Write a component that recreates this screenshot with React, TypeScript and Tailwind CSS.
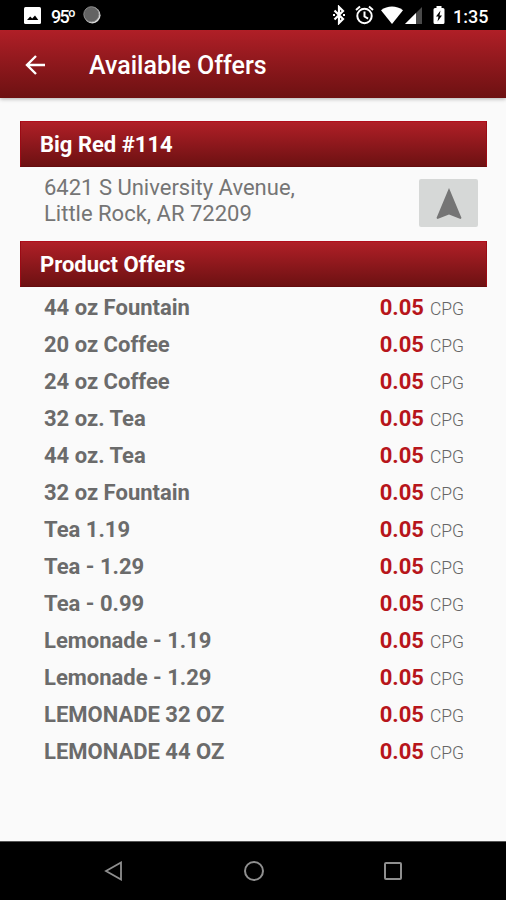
const offers = [
    "44 oz Fountain",
    "20 oz Coffee",
    "24 oz Coffee",
    "32 oz. Tea",
    "44 oz. Tea",
    "32 oz Fountain",
    "Tea 1.19",
    "Tea - 1.29",
    "Tea - 0.99",
    "Lemonade - 1.19",
    "Lemonade - 1.29",
    "LEMONADE 32 OZ",
    "LEMONADE 44 OZ",
];

function StatusBar() {
    return (
        <div className="flex h-[30px] shrink-0 items-center bg-black pl-6 pr-[18px] text-white">
            <svg className="h-[17px] w-[17px]" viewBox="0 0 17 17">
                <rect width="17" height="17" rx="1.5" fill="#fff" />
                <path d="M3 13 6.200 9.500l2 2L11 8.500l3.300 4.500z" fill="#000" />
            </svg>
            <span className="ml-2.5 w-[24px] whitespace-nowrap pt-0.5 text-[18px] font-medium tracking-[-1.800px]">95º</span>
            <svg className="ml-2 h-[18px] w-[18px]" viewBox="0 0 18 18">
                <circle cx="9.300" cy="9.200" r="8.200" fill="#ddd" />
                <circle cx="8.400" cy="8.300" r="7.600" fill="#636363" />
                <circle cx="8.400" cy="8.300" r="7.600" fill="none" stroke="#8a8a8a" />
            </svg>
            <div className="ml-auto flex items-center">
                <svg className="h-[20px] w-[14px]" viewBox="0 0 14 20" fill="none" stroke="#fff" strokeWidth="2.200">
                    <path d="M2.500 5.500 11 14l-4 4V2l4 4-8.500 8.500" />
                    <path d="M1 10h2M11 10h2" />
                </svg>
                <svg className="ml-[9px] h-[20px] w-[19px]" viewBox="0 0 19 20" fill="none" stroke="#fff" strokeWidth="2">
                    <circle cx="9.500" cy="11" r="7.200" />
                    <path d="M9.500 6.500v5l3.600 2.100M1 5l4-3.400M18 5l-4-3.400" />
                </svg>
                <svg className="ml-[7px] h-[18px] w-[22px]" viewBox="0 0 22 18">
                    <path d="M0 4.200C6.500-.8 15.500-.8 22 4.200L11 18z" fill="#fff" />
                </svg>
                <svg className="ml-[2px] h-[18px] w-[18px]" viewBox="0 0 18 18">
                    <path d="M0 18 17 1v17z" fill="#4a4a4a" />
                    <path d="M0 18 11 7V18z" fill="#fff" />
                </svg>
                <svg className="ml-[10px] h-[20px] w-[12px]" viewBox="0 0 12 20">
                    <path d="M3.500 1h5v2H10a1.500 1.500 0 0 1 1.500 1.500v13A1.500 1.500 0 0 1 10 19H2a1.500 1.500 0 0 1-1.500-1.500v-13A1.500 1.500 0 0 1 2 3h1.500z" fill="#fff" />
                    <path d="M7.500 5.500 3 11.500h2.500L4.500 16.500 9 10.500H6.500z" fill="#000" />
                </svg>
                <span className="ml-2 w-[35px] whitespace-nowrap pt-0.5 text-[18px] font-medium">1:35</span>
            </div>
        </div>
    );
}

function SectionHeader({ title }: { title: string }) {
    return (
        <h2 className="flex h-[46px] items-center border border-t-[#b00d1b] border-r-[#9c0a14] border-b-[#650d0f] border-l-[#9c0a14] bg-gradient-to-b from-[#b01f27] to-[#6d1112] pl-[19px] text-[22px] font-bold text-white">
            {title}
        </h2>
    );
}

function NavBar() {
    return (
        <div className="flex h-[59px] shrink-0 items-center justify-between border-t border-[#555] bg-black pr-[104px] pl-[104px]">
            <svg className="h-5 w-[18px]" viewBox="0 0 18 20" fill="none" stroke="#8f8f8f" strokeWidth="1.800">
                <path d="M2 10 17 1.500v17z" />
            </svg>
            <svg className="ml-px h-5 w-5" viewBox="0 0 20 20" fill="none" stroke="#8f8f8f" strokeWidth="2">
                <circle cx="10" cy="10" r="9" />
            </svg>
            <svg className="h-[18px] w-[18px]" viewBox="0 0 18 18" fill="none" stroke="#8f8f8f" strokeWidth="2">
                <rect x="1" y="1" width="16" height="16" rx="1" />
            </svg>
        </div>
    );
}

export default function App() {
    return (
        <div className="flex h-[900px] w-[506px] flex-col overflow-hidden bg-[#fafafa] font-[Roboto,sans-serif]">
            <StatusBar />
            <header className="flex h-[68px] shrink-0 items-center bg-gradient-to-b from-[#b01f27] to-[#6d1112] pt-[4px] pl-[25px] text-white shadow-[0_1px_4px_rgba(0,0,0,0.3)]">
                <svg className="mb-[3px] h-5 w-5" viewBox="0 0 20 20" fill="none" stroke="#fff" strokeWidth="2.400">
                    <path d="M20 10H2M11 1 2 10l9 9" />
                </svg>
                <h1 className="ml-11 text-[25px] font-medium">Available Offers</h1>
            </header>
            <main className="flex-1 pt-[23px] pr-[19px] pl-5">
                <SectionHeader title="Big Red #114" />
                <div className="flex h-[74px] justify-between pr-[9px] pl-6">
                    <address className="pt-2 text-[22px] leading-[26px] text-[#757575] not-italic">
                        6421 S University Avenue,
                        <br />
                        Little Rock, AR 72209
                    </address>
                    <button className="mt-3 flex h-[48px] w-[59px] items-center justify-center rounded-[2px] bg-[#d6d8d7]">
                        <svg className="h-[31px] w-[26px]" viewBox="0 0 26 31">
                            <path d="M13 0 25.500 30l-1 1L13 26.500 1.500 31l-1-1z" fill="#757575" />
                        </svg>
                    </button>
                </div>
                <SectionHeader title="Product Offers" />
                <ul className="pt-[2px] pr-[23px] pl-6">
                    {offers.map((offer) => (
                        <li key={offer} className="flex h-[37px] items-center justify-between">
                            <span className="text-[22px] font-bold text-[#6b6b6b]">{offer}</span>
                            <span className="flex items-baseline gap-1.5">
                                <span className="text-[22px] font-bold text-[#b7151b]">0.05</span>
                                <span className="text-[17.500px] font-light text-[#666]">CPG</span>
                            </span>
                        </li>
                    ))}
                </ul>
            </main>
            <NavBar />
        </div>
    );
}
